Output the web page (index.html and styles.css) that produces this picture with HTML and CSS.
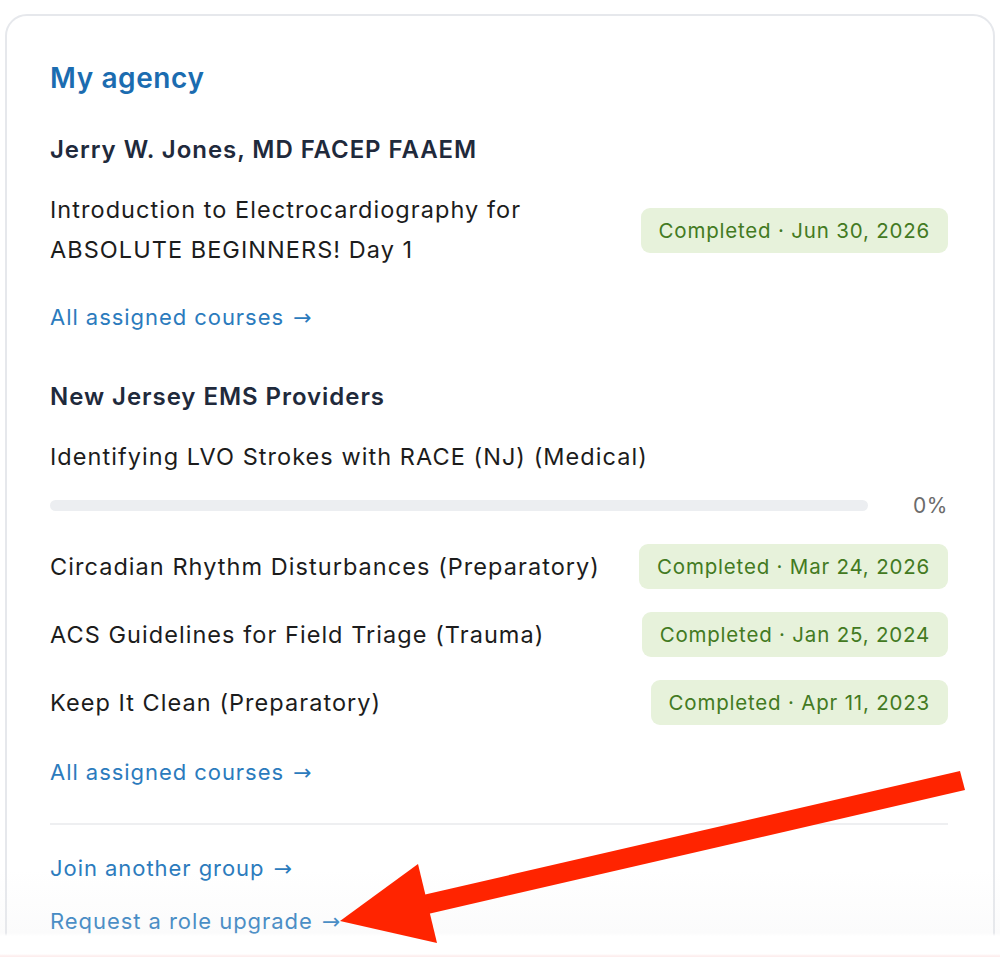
FILE: index.html
```html
<!DOCTYPE html>
<html lang="en">
<head>
  <meta charset="UTF-8">
  <meta name="viewport" content="width=device-width, initial-scale=1.0">
  <title>My agency</title>
  <link rel="stylesheet" href="styles.css">
</head>
<body>
  <div class="agency-card">
    <h2 class="card-title">My agency</h2>

    <section class="group">
      <h3 class="group-name">Jerry W. Jones, MD FACEP FAAEM</h3>
      <div class="course-row">
        <span class="course-name">Introduction to Electrocardiography for ABSOLUTE BEGINNERS! Day 1</span>
        <span class="badge">Completed · Jun 30, 2026</span>
      </div>
      <a class="link all-courses" href="#">All assigned courses <span class="arrow">→</span></a>
    </section>

    <section class="group">
      <h3 class="group-name">New Jersey EMS Providers</h3>
      <div class="course-row">
        <span class="course-name">Identifying LVO Strokes with RACE (NJ) (Medical)</span>
      </div>
      <div class="progress-row">
        <div class="progress-track"><div class="progress-fill" style="width: 0%"></div></div>
        <span class="progress-value">0%</span>
      </div>
      <div class="course-row">
        <span class="course-name">Circadian Rhythm Disturbances (Preparatory)</span>
        <span class="badge">Completed · Mar 24, 2026</span>
      </div>
      <div class="course-row">
        <span class="course-name">ACS Guidelines for Field Triage (Trauma)</span>
        <span class="badge">Completed · Jan 25, 2024</span>
      </div>
      <div class="course-row">
        <span class="course-name">Keep It Clean (Preparatory)</span>
        <span class="badge">Completed · Apr 11, 2023</span>
      </div>
      <a class="link all-courses" href="#">All assigned courses <span class="arrow">→</span></a>
    </section>

    <div class="card-footer">
      <a class="link" href="#">Join another group <span class="arrow">→</span></a>
      <a class="link" href="#">Request a role upgrade <span class="arrow">→</span></a>
    </div>
  </div>

  <!-- screenshot edge + annotation arrow -->
  <div class="bottom-fade"></div>
  <svg class="annotation" width="1000" height="957" viewBox="0 0 1000 957">
    <polygon points="960,771 965,790 428,914 423,895" fill="#ff2400"/>
    <polygon points="340,921 418,864 437,943" fill="#ff2400"/>
  </svg>
</body>
</html>
```

FILE: styles.css
```css
body {
  font-family: 'Inter', 'Liberation Sans', sans-serif;
  margin: 0;
  padding: 0;
  background-color: #ffffff;
  color: #1c1c1c;
  position: relative;
  height: 957px;
  overflow: hidden;
}

.agency-card {
  margin: 14px 0 0 5px;
  width: 990px;
  box-sizing: border-box;
  border: 2px solid #e6e8ec;
  border-radius: 22px;
  padding: 45px 45px 60px 43px;
}

.card-title {
  margin: 0;
  font-size: 28px;
  line-height: 34px;
  font-weight: 600;
  letter-spacing: 0.6px;
  color: #1b6cb0;
}

.group {
  display: flex;
  flex-direction: column;
}

.group + .group {
  margin-top: 49px;
}

.card-title + .group {
  margin-top: 40px;
}

.group-name {
  margin: 0 0 25px 0;
  font-size: 24px;
  line-height: 30px;
  font-weight: 600;
  letter-spacing: 0.95px;
  color: #1f2a3c;
}

.course-row {
  display: flex;
  align-items: center;
  justify-content: space-between;
  gap: 30px;
}

.course-row + .course-row {
  margin-top: 23px;
}

.course-name {
  font-size: 23.5px;
  line-height: 40px;
  letter-spacing: 1.05px;
  color: #1c1c1c;
}

.badge {
  flex-shrink: 0;
  background-color: #e7f2db;
  color: #437a22;
  font-size: 20.5px;
  line-height: 25px;
  letter-spacing: 0.8px;
  padding: 10px 18px;
  border-radius: 9px;
}

.progress-row {
  display: flex;
  align-items: center;
  gap: 44px;
  margin: 13px 0 24px 0;
  height: 30px;
}

.progress-track {
  flex: 1;
  height: 11px;
  border-radius: 6px;
  background-color: #eceef1;
  overflow: hidden;
}

.progress-fill {
  height: 100%;
  background-color: #2b7bbd;
}

.progress-value {
  font-size: 21px;
  letter-spacing: 0.6px;
  color: #6b6b6b;
  width: 36px;
  text-align: right;
}

.link {
  font-size: 22px;
  line-height: 30px;
  letter-spacing: 0.95px;
  color: #2b7bbd;
  text-decoration: none;
}

.arrow {
  font-family: 'DejaVu Sans', sans-serif;
  font-size: 22px;
  letter-spacing: 0;
  margin-left: 2px;
}

.all-courses {
  margin-top: 32px;
  align-self: flex-start;
}

.card-footer {
  display: flex;
  flex-direction: column;
  align-items: flex-start;
  gap: 22px;
  margin-top: 35px;
  padding-top: 28px;
  border-top: 2px solid #eeeff1;
}

.bottom-fade {
  position: absolute;
  left: 0;
  right: 0;
  top: 870px;
  height: 87px;
  background: linear-gradient(to bottom, rgba(235, 235, 237, 0) 0px, rgba(235, 235, 237, 0.2) 63px, #ffffff 66px, #ffffff 84px, #fdeeee 86px);
}

.annotation {
  position: absolute;
  left: 0;
  top: 0;
  pointer-events: none;
}
```
